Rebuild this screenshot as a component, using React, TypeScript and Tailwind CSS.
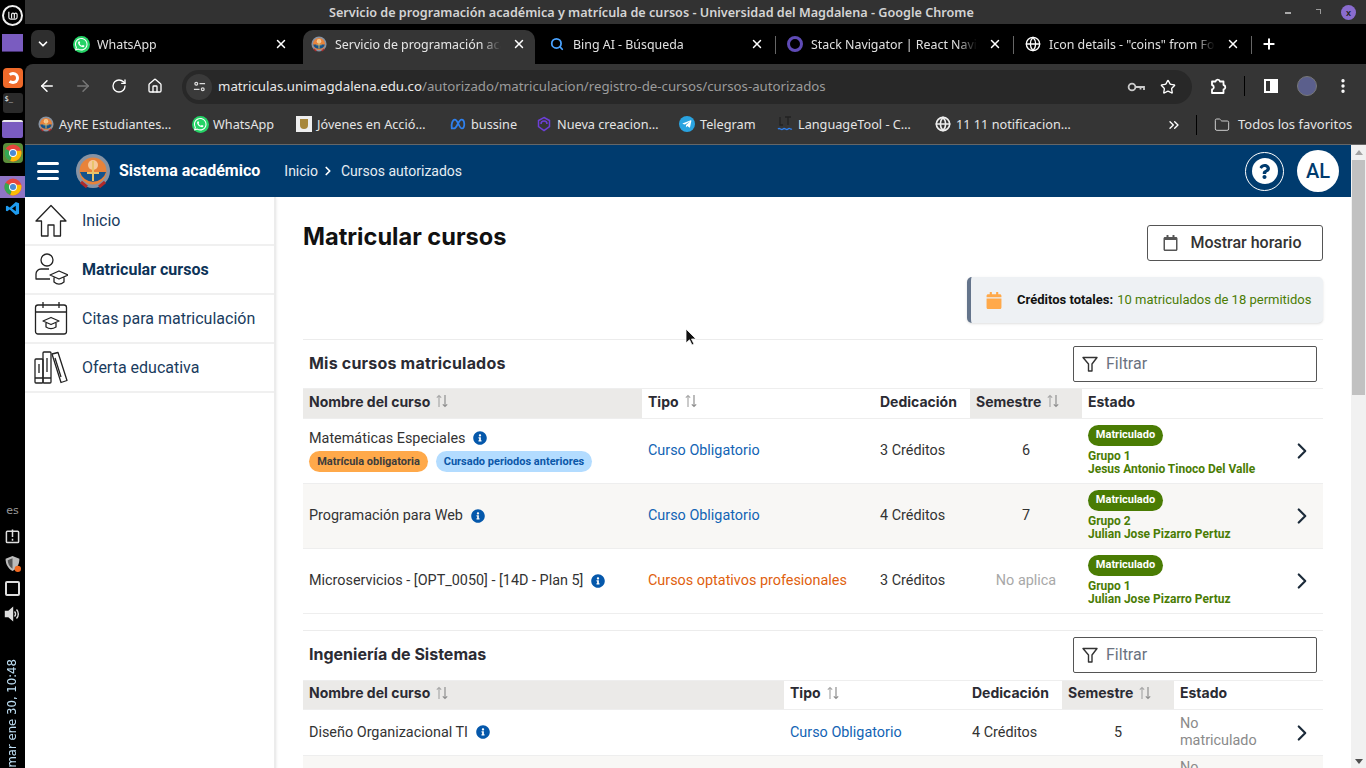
import React from 'react';
import { ArrowLeft, ArrowRight, RotateCw, Home, Star, MoreVertical, ChevronDown, X, Plus, ChevronsRight, Folder, ChevronRight, Search, Globe } from 'lucide-react';
import { FaWhatsapp, FaTelegramPlane, FaInfoCircle, FaQuestion, FaRegCalendar, FaCalendar } from 'react-icons/fa';

const chromeFont = "font-['Noto_Sans',sans-serif]";

const WhatsIcon = ({ s = 'w-[17px] h-[17px]' }: { s?: string }) => (
  <span className={`${s} rounded-full bg-[#25d366] flex items-center justify-center text-white shrink-0`}>
    <FaWhatsapp className="w-[85%] h-[85%]" />
  </span>
);

const UniLogo = ({ s = 'w-4 h-4' }: { s?: string }) => (
  <svg viewBox="0 0 36 36" className={`${s} shrink-0`}>
    <circle cx="18" cy="18" r="17" fill="#8793a3" />
    <circle cx="18" cy="18" r="13.5" fill="#e8833a" />
    <path d="M5 19h26a13.500 13.500 0 0 1-26 0z" fill="#14538c" />
    <circle cx="18" cy="12" r="5" fill="#f6c99a" />
    <path d="M17 8h2v20h-2zM12 19h12v2H12z" fill="#e9c46a" />
    <path d="M6 29l6 5M30 29l-6 5" stroke="#b02a2a" strokeWidth="3" />
  </svg>
);

const ChromeIcon = () => (
  <svg viewBox="0 0 20 20" className="w-[18px] h-[18px]">
    <circle cx="10" cy="10" r="9.500" fill="#e8453c" />
    <path d="M10 10L1.800 5.200A9.500 9.500 0 0 0 7 19z" fill="#34a853" />
    <path d="M10 10l-3 9A9.500 9.500 0 0 0 19 7.500H10z" fill="#fbbc05" />
    <circle cx="10" cy="10" r="4.400" fill="#fff" />
    <circle cx="10" cy="10" r="3.400" fill="#4a8ad4" />
  </svg>
);

const Tab = ({ icon, label, active, sep }: { icon: React.ReactNode; label: string; active?: boolean; sep?: boolean }) => (
  <div className={`relative w-[238px] h-10 flex items-center shrink-0 ${chromeFont} text-[12.400px]`}>
    {active && <div className="absolute left-[3px] right-[3px] top-[6px] bottom-0 bg-[#353535] rounded-t-[10px]" />}
    <div className="relative w-[35px] pl-[3px] flex justify-center shrink-0">{icon}</div>
    <span className={`relative w-[166px] pt-[3px] overflow-hidden whitespace-nowrap [mask-image:linear-gradient(to_right,black_88%,transparent)] ${active ? 'text-[#e6e6e6]' : 'text-[#e0e0e0]'}`}>{label}</span>
    <X className="relative w-3.5 h-3.5 text-white ml-[11px]" strokeWidth={2.5} />
    {sep && <div className="absolute right-0 top-[12px] h-[18px] w-px bg-[#666]" />}
  </div>
);

const Bookmark = ({ icon, label, w }: { icon: React.ReactNode; label: string; w: string }) => (
  <div className={`flex items-center gap-[5px] shrink-0 ${w}`}>
    <span className="w-4 flex justify-center shrink-0">{icon}</span>
    <span className="whitespace-nowrap text-[12.700px] text-[#e4e4e4]">{label}</span>
  </div>
);

const SortIcon = () => (
  <svg viewBox="0 0 14 14" className="w-[14px] h-[14px] ml-[5px] shrink-0" fill="none" stroke="#a9a9a9" strokeWidth="1.200">
    <path d="M4 13V1.500M1.800 3.700L4 1.500l2.200 2.200" />
    <path d="M10 1v11.500M7.800 10.300L10 12.500l2.200-2.200" stroke="#8f8f8f" />
  </svg>
);

const Info = ({ ml = 'ml-[8px]' }: { ml?: string }) => <FaInfoCircle className={`w-[14px] h-[14px] text-[#0558ab] inline-block shrink-0 ${ml}`} />;

const Filter = ({ cls = '' }: { cls?: string }) => (
  <div className={`w-[244px] h-[36px] border border-[#555] rounded-[2px] mr-[6px] flex items-center pl-[7px] gap-[7px] ${cls}`}>
    <svg viewBox="0 0 18 18" className="w-[18px] h-[18px]" fill="none" stroke="#333" strokeWidth="1.400">
      <path d="M2 2.500h14l-5 6.500v7H7.500V9z" strokeLinejoin="round" />
    </svg>
    <span className="text-[16px] text-[#6b7280]">Filtrar</span>
  </div>
);

const HeadCell = ({ label, sort, shaded }: { label: string; sort?: boolean; shaded?: boolean }) => (
  <div className={`h-full flex items-center pl-[6px] pb-[5px] font-['Inter',sans-serif] text-[14px] font-bold text-[#2b2b33] ${shaded ? 'bg-[#ebeae8]' : ''}`}>
    {label}
    {sort && <SortIcon />}
  </div>
);

const Matriculado = ({ grupo, docente }: { grupo: string; docente: string }) => (
  <div className="flex flex-col items-start pb-[1px]">
    <span className="w-[75px] h-[21px] rounded-full bg-[#4a7c04] text-white text-[11px] font-bold flex items-center justify-center">Matriculado</span>
    <span className="mt-[4px] text-[12px] leading-[13px] font-bold text-[#4a7c04]">{grupo}</span>
    <span className="text-[12px] leading-[13px] font-bold text-[#4a7c04]">{docente}</span>
  </div>
);

const Arrow = () => <ChevronRight className="w-[26px] h-[26px] text-[#1c2b3a] shrink-0" strokeWidth={2} />;

const BigHomeIcon = () => (
  <svg viewBox="0 0 34 34" className="w-[34px] h-[34px]" fill="none" stroke="#222" strokeWidth="1.300" strokeLinejoin="round">
    <path d="M17 1.500L2 17h5.500v15H14V21h6v11h6.500V17H32z" />
  </svg>
);
const StudentIcon = () => (
  <svg viewBox="0 0 34 34" className="w-[34px] h-[34px]" fill="none" stroke="#222" strokeWidth="1.300" strokeLinejoin="round">
    <circle cx="13" cy="7" r="6" />
    <path d="M15 16H7a5 5 0 0 0-5 5v5h14" />
    <path d="M16 22l9-4 9 4-9 4zM20 24.500V29c3 2.500 7 2.500 10 0v-4.500" />
  </svg>
);
const CalIcon = () => (
  <svg viewBox="0 0 34 34" className="w-[34px] h-[34px]" fill="none" stroke="#222" strokeWidth="1.300" strokeLinejoin="round">
    <rect x="1.500" y="3" width="31" height="29" rx="2.500" />
    <path d="M1.500 10h31M9 0v6M25 0v6" />
    <path d="M9 19l8-3.500 8 3.500-8 3.500zM12 21v4c3 2 7 2 10 0v-4" />
  </svg>
);
const BooksIcon = () => (
  <svg viewBox="0 0 34 34" className="w-[34px] h-[34px]" fill="none" stroke="#222" strokeWidth="1.300" strokeLinejoin="round">
    <rect x="1" y="8" width="8" height="24" rx="1" />
    <rect x="9" y="1" width="8" height="31" rx="1" />
    <path d="M18 3l6-1.500 9 28-6 2z" />
    <path d="M5 13v9M13 7v14M21 7l6 19M1 27h8M9 27h8" />
  </svg>
);

const SideItem = ({ icon, label, bold }: { icon: React.ReactNode; label: string; bold?: boolean }) => (
  <div className="h-[49px] border-b-2 border-[#f0f0f0] flex items-center pl-[9px] gap-[14px]">
    <span className="w-[34px] flex justify-center">{icon}</span>
    <span className={`text-[16px] ${bold ? 'font-bold text-[#0d3358]' : 'text-[#1a3c5e]'}`}>{label}</span>
  </div>
);

const App = () => {
  return (
    <div className="relative w-[1366px] h-[768px] overflow-hidden flex bg-black font-['Roboto',sans-serif]">
      {/* dock */}
      <div className="w-[25px] h-full shrink-0 bg-black flex flex-col items-center relative">
        <div className="mt-[5px] w-[21px] h-[21px] rounded-full border-2 border-[#eee] flex items-center justify-center text-[#eee]">
          <svg viewBox="0 0 12 12" className="w-[11px] h-[11px]" fill="none" stroke="currentColor" strokeWidth="1.300"><path d="M2 2v6a2 2 0 0 0 2 2h5a2 2 0 0 0 2-2V5a1.500 1.500 0 0 0-3 0v4M5 9V5a1.500 1.500 0 0 1 3 0" /></svg>
        </div>
        <div className="mt-[8px] w-[21px] h-[18px] bg-[#7a5cc0] border-b border-[#453070]" />
        <div className="mt-[16px] w-[20px] h-[20px] rounded-[4px] bg-[#ef6a2a] flex items-center justify-center">
          <div className="w-[12px] h-[12px] rounded-full border-[3px] border-white border-l-transparent" />
        </div>
        <div className="mt-[5px] w-[20px] h-[20px] rounded-[3px] bg-[#2a2a2a] text-white text-[7px] font-['DejaVu_Sans_Mono',monospace] leading-[12px] pl-[2px]">$_</div>
        <div className="mt-[7px] w-[21px] h-[18px] rounded-[2px] bg-[#7a5cc0] border-t-2 border-[#eee]" />
        <div className="mt-[5px] w-[20px] h-[20px] rounded-[4px] bg-[#5b8f3a] flex items-center justify-center"><ChromeIcon /></div>
        <div className="mt-[13px] w-[25px] h-[22px] bg-[#8f74c4] flex items-center justify-center"><ChromeIcon /></div>
        <div className="mt-[3px]">
          <svg viewBox="0 0 16 16" className="w-[15px] h-[15px]"><path d="M11.500 1L5 7 2.300 5 1 5.700v4.600L2.300 11 5 9l6.500 6L15 13.500v-11zM11.500 5v6L7.500 8z" fill="#1f9cf0" /></svg>
        </div>
        <div className="absolute top-[503px] left-0 w-full text-center text-[11px] text-[#9a9a9a] font-['DejaVu_Sans',sans-serif]">es</div>
        <svg viewBox="0 0 16 16" className="absolute top-[528px] left-[5px] w-[15px] h-[16px]" fill="none" stroke="#ddd" strokeWidth="1.600"><rect x="1.500" y="3" width="13" height="12" rx="1" /><path d="M8 1v8M8 11v2" /></svg>
        <svg viewBox="0 0 16 16" className="absolute top-[555px] left-[4px] w-[17px] h-[17px]"><path d="M8 1l6.500 2.500c0 5-2 9-6.500 11.500C3.500 12.500 1.500 8.500 1.500 3.500z" fill="#bbb" /><path d="M8 3v10c-3-2-4.500-5-4.500-8z" fill="#555" /><circle cx="13" cy="13" r="3" fill="#f26a21" /></svg>
        <div className="absolute top-[581px] left-[5px] w-[15px] h-[15px] rounded-[2px] border-2 border-[#ddd] bg-black" />
        <svg viewBox="0 0 16 16" className="absolute top-[606px] left-[4px] w-[17px] h-[16px]" fill="none" stroke="#ddd" strokeWidth="1.400"><path d="M1 5.500h3L8 2v12l-4-3.500H1z" fill="#ddd" /><path d="M10 5.500a3.500 3.500 0 0 1 0 5M12 3.500a6.500 6.500 0 0 1 0 9" /></svg>
        <div className="absolute bottom-0 left-[4px] [writing-mode:vertical-rl] rotate-180 text-[11.700px] leading-[17px] whitespace-nowrap font-['DejaVu_Sans',sans-serif] text-[#bfe0f5]">mar ene 30, 10:48</div>
      </div>

      {/* chrome window */}
      <div className="flex-1 min-w-0 flex flex-col">
        <div className={`h-6 bg-[#323232] flex items-center relative shrink-0 pl-[304px] ${chromeFont} text-[12.640px] font-semibold text-[#d4d4d4] whitespace-nowrap`}>
          Servicio de programación académica y matrícula de cursos - Universidad del Magdalena - Google Chrome
          <div className="absolute left-[1260px] top-[12px] w-[6px] h-[1.500px] bg-[#aaa]" />
          <div className="absolute left-[1291px] top-[9px] w-[5px] h-[5px] border-r border-t border-[#999]" />
          <div className="absolute left-[1316px] top-[5px] w-[15px] h-[15px] rounded-full bg-[#8a6ccf] text-[#222] text-[9px] flex items-center justify-center">x</div>
        </div>

        <div className="h-10 bg-black flex items-center shrink-0 relative">
          <div className="w-[24px] h-[28px] ml-[6px] mr-[7px] rounded-[7px] bg-[#2e2e2e] flex items-center justify-center shrink-0">
            <ChevronDown className="w-3.5 h-3.5 text-white" strokeWidth={3} />
          </div>
          <Tab icon={<WhatsIcon />} label="WhatsApp" />
          <Tab icon={<UniLogo />} label="Servicio de programación académica" active />
          <Tab icon={<Search className="w-3.5 h-3.5 text-[#4aa3ff]" strokeWidth={3} />} label="Bing AI - Búsqueda" sep />
          <Tab icon={<span className="w-4 h-4 rounded-full border-[3px] border-[#5f4bb6] block" />} label="Stack Navigator | React Navigation" sep />
          <Tab icon={<Globe className="w-4 h-4 text-white" />} label={'Icon details - "coins" from Font Awesome'} sep />
          <Plus className="w-4 h-4 text-white ml-[9px]" strokeWidth={3} />
        </div>

        <div className={`h-[44px] bg-[#353535] rounded-tl-[8px] flex items-center shrink-0 ${chromeFont}`}>
          <ArrowLeft className="w-[18px] h-[18px] text-white ml-[13px]" strokeWidth={2} />
          <ArrowRight className="w-[18px] h-[18px] text-[#777] ml-[18px]" strokeWidth={2} />
          <RotateCw className="w-[16px] h-[16px] text-white ml-[19px]" strokeWidth={2} />
          <Home className="w-[16px] h-[16px] text-white ml-[20px]" strokeWidth={2} />
          <div className="ml-[19px] w-[1010px] h-[34px] mt-[1px] rounded-full bg-[#282828] flex items-center pl-[4px] pr-[16px]">
            <div className="w-[26px] h-[26px] rounded-full bg-[#3a3a3a] flex items-center justify-center shrink-0">
              <svg viewBox="0 0 14 14" className="w-[13px] h-[13px]" fill="none" stroke="#ddd" strokeWidth="1.300"><circle cx="3.500" cy="4" r="1.500" /><path d="M7 4h6M1 10h6" /><circle cx="10.500" cy="10" r="1.500" /></svg>
            </div>
            <span className="ml-[6px] pt-[1px] text-[13.250px] text-[#e8e8e8] whitespace-nowrap">matriculas.unimagdalena.edu.co<span className="text-[#9c9c9c]">/autorizado/matriculacion/registro-de-cursos/cursos-autorizados</span></span>
            <svg viewBox="0 0 18 12" className="w-[18px] h-[12px] ml-auto" fill="none" stroke="#ccc" strokeWidth="1.800"><circle cx="5" cy="6" r="3.400" /><path d="M8.500 6H17v3M13.500 6v2.500" /></svg>
            <Star className="w-4 h-4 text-white ml-[15px]" strokeWidth={2} />
          </div>
          <svg viewBox="0 0 18 18" className="w-[18px] h-[18px] ml-[17px]" fill="none" stroke="#fff" strokeWidth="1.800" strokeLinejoin="round"><path d="M3 4.500h3.500a2.300 2.300 0 0 1 4.500 0H14.500V8a2.300 2.300 0 0 1 0 4.500V16H3v-3.500a2.300 2.300 0 0 0 0-4.500z" /></svg>
          <div className="w-px h-5 bg-black ml-[17px]" />
          <div className="w-[14px] h-[14px] border-2 border-white ml-[19px] flex justify-end"><div className="w-[6px] h-full bg-white" /></div>
          <div className="ml-[19px] w-5 h-5 rounded-full bg-[#5b5f8c] border border-[#777]" />
          <MoreVertical className="w-[18px] h-[18px] text-white ml-[17px]" strokeWidth={2.500} />
        </div>

        <div className={`h-[37px] pb-[3px] bg-[#353535] border-b border-[#666] flex items-center pl-[13px] shrink-0 ${chromeFont}`}>
          <Bookmark w="w-[154px]" icon={<UniLogo />} label="AyRE Estudiantes…" />
          <Bookmark w="w-[104px]" icon={<WhatsIcon />} label="WhatsApp" />
          <Bookmark w="w-[154px]" icon={<span className="w-4 h-4 bg-[#eee] flex items-center justify-center"><span className="w-2 h-2.5 bg-[#a8873a] rounded-b-full" /></span>} label="Jóvenes en Acció…" />
          <Bookmark w="w-[86px]" icon={<svg viewBox="0 0 18 12" className="w-4 h-3" fill="none" stroke="#2f80ed" strokeWidth="2"><path d="M2 11C1 6 3 1 5.500 1 9 1 10 11 13.500 11 17 11 17 1 13 1 9.500 1 8 11 4.500 11 3 11 2 11 2 11z" /></svg>} label="bussine" />
          <Bookmark w="w-[143px]" icon={<svg viewBox="0 0 16 16" className="w-4 h-4" fill="none" stroke="#6d3fd8" strokeWidth="1.500"><path d="M8 1.500l5.500 3v6L8 14.500 2.500 10.500v-6zM5 8a3 3 0 0 1 6 0" /></svg>} label="Nueva creacion…" />
          <Bookmark w="w-[98px]" icon={<span className="w-4 h-4 rounded-full bg-[#2aa3e0] flex items-center justify-center text-white"><FaTelegramPlane className="w-2.5 h-2.5" /></span>} label="Telegram" />
          <Bookmark w="w-[158px]" icon={<svg viewBox="0 0 16 16" className="w-4 h-4" fill="none" strokeWidth="1.300"><path d="M3 1v8h3M8 1h6M11 1v8" stroke="#222" /><path d="M1 13c2-2 3 2 5 0s3 2 5 0 2 1 4 0" stroke="#2f80ed" /></svg>} label="LanguageTool - C…" />
          <Bookmark w="w-[231px]" icon={<Globe className="w-4 h-4 text-[#eee]" strokeWidth={2.5} />} label="11 11 notificacion…" />
          <ChevronsRight className="w-4 h-4 text-white" strokeWidth={2} />
          <div className="w-px h-5 bg-black ml-[14px]" />
          <Folder className="w-4 h-4 text-[#ccc] ml-[17px]" strokeWidth={1.500} />
          <span className="ml-[8px] text-[13px] text-[#e4e4e4] whitespace-nowrap">Todos los favoritos</span>
        </div>

        <div className="flex-1 min-h-0 flex bg-white">
          <div className="flex-1 min-w-0 flex flex-col">
            <div className="h-[52px] bg-[#003b6e] flex items-center shrink-0 relative text-white">
              <div className="ml-[12px] w-[22px] flex flex-col gap-[4.500px]">
                <div className="h-[3px] bg-white rounded-sm" />
                <div className="h-[3px] bg-white rounded-sm" />
                <div className="h-[3px] bg-white rounded-sm" />
              </div>
              <div className="ml-[16px]"><UniLogo s="w-[36px] h-[36px]" /></div>
              <span className="ml-[8px] text-[16px] font-bold">Sistema académico</span>
              <span className="ml-[24px] text-[14px] text-[#e6edf3]">Inicio</span>
              <ChevronRight className="w-3.5 h-3.5 mx-[3px]" strokeWidth={3} />
              <span className="ml-[3px] text-[14px] text-[#e6edf3]">Cursos autorizados</span>
              <div className="ml-auto w-[39px] h-[39px] rounded-full border border-white flex items-center justify-center">
                <span className="w-[26px] h-[26px] rounded-full bg-white flex items-center justify-center text-[#003b6e]"><FaQuestion className="w-[13px] h-[15px]" /></span>
              </div>
              <div className="ml-[13px] mr-[12px] w-[42px] h-[42px] rounded-full bg-white text-[#003b6e] text-[20px] font-medium flex items-center justify-center">AL</div>
            </div>

            <div className="flex-1 min-h-0 flex">
              <div className="w-[251px] shrink-0 border-r-2 border-[#ececec] shadow-sm">
                <SideItem icon={<BigHomeIcon />} label="Inicio" />
                <SideItem icon={<StudentIcon />} label="Matricular cursos" bold />
                <SideItem icon={<CalIcon />} label="Citas para matriculación" />
                <SideItem icon={<BooksIcon />} label="Oferta educativa" />
              </div>

              <div className="flex-1 min-w-0 overflow-hidden pl-[27px] pr-[28px] pt-[28px]">
                <div className="flex items-start justify-between">
                  <h1 className="font-['Inter',sans-serif] text-[23.600px] leading-[24px] font-bold text-[#111]">Matricular cursos</h1>
                  <div className="w-[176px] h-[36px] border border-[#555] rounded-[3px] flex items-center justify-center gap-[12px] text-[#333] text-[16px] font-medium pr-[5px]">
                    <FaRegCalendar className="w-[15px] h-[16px] text-[#555]" />
                    Mostrar horario
                  </div>
                </div>

                <div className="mt-[16px] ml-auto w-[356px] h-[46px] bg-[#eef1f4] border-l-4 border-[#64748b] rounded-[5px] shadow-sm flex items-center pl-[15px] text-[13px]">
                  <FaCalendar className="w-[16px] h-[17px] text-[#ffa94a]" />
                  <span className="ml-[15px] font-bold text-[#111]">Créditos totales:</span>
                  <span className="ml-[4px] text-[#4a7c04]">10 matriculados de 18 permitidos</span>
                </div>

                {/* mis cursos */}
                <div className="mt-[16px] h-[49px] border-t border-[#ececec] flex items-center justify-between pl-[6px]">
                  <span className="font-['Inter',sans-serif] text-[16px] tracking-[0.2px] -mt-[2px] font-bold text-[#2b2b33]">Mis cursos matriculados</span>
                  <Filter />
                </div>
                <div className="h-[31px] border-y border-[#eeeeee] grid grid-cols-[339px_232px_96px_112px_241px] items-center">
                  <HeadCell label="Nombre del curso" sort shaded />
                  <HeadCell label="Tipo" sort />
                  <HeadCell label="Dedicación" />
                  <HeadCell label="Semestre" sort shaded />
                  <HeadCell label="Estado" />
                </div>
                <div className="h-[65px] border-b border-[#eeeeee] grid grid-cols-[339px_232px_96px_112px_241px] items-center text-[14.400px] text-[#333]">
                  <div className="pl-[6px] pb-[2px] flex flex-col items-start">
                    <div className="flex items-center">Matemáticas Especiales<Info /></div>
                    <div className="flex gap-[8px] mt-[2px]">
                      <span className="w-[119px] h-[21px] rounded-full bg-[#ffa94a] text-[#3c3c3c] text-[11px] font-bold flex items-center justify-center">Matrícula obligatoria</span>
                      <span className="w-[156px] h-[21px] rounded-full bg-[#b3dcff] text-[#0b57a8] text-[11px] font-bold flex items-center justify-center">Cursado periodos anteriores</span>
                    </div>
                  </div>
                  <div className="pl-[6px] text-[#1264b4]">Curso Obligatorio</div>
                  <div className="pl-[6px]">3 Créditos</div>
                  <div className="text-center">6</div>
                  <div className="pl-[6px] flex items-center justify-between pr-[8px]"><Matriculado grupo="Grupo 1" docente="Jesus Antonio Tinoco Del Valle" /><Arrow /></div>
                </div>
                <div className="h-[65px] bg-[#f8f7f5] border-b border-[#eeeeee] grid grid-cols-[339px_232px_96px_112px_241px] items-center text-[14.400px] text-[#333]">
                  <div className="pl-[6px] flex items-center">Programación para Web<Info /></div>
                  <div className="pl-[6px] text-[#1264b4]">Curso Obligatorio</div>
                  <div className="pl-[6px]">4 Créditos</div>
                  <div className="text-center">7</div>
                  <div className="pl-[6px] flex items-center justify-between pr-[8px]"><Matriculado grupo="Grupo 2" docente="Julian Jose Pizarro Pertuz" /><Arrow /></div>
                </div>
                <div className="h-[65px] border-b border-[#eeeeee] grid grid-cols-[339px_232px_96px_112px_241px] items-center text-[14.400px] text-[#333]">
                  <div className="pl-[6px] flex items-center">Microservicios - [OPT_0050] - [14D - Plan 5]<Info /></div>
                  <div className="pl-[6px] text-[#e0610e]">Cursos optativos profesionales</div>
                  <div className="pl-[6px]">3 Créditos</div>
                  <div className="text-center text-[#a8a8a8]">No aplica</div>
                  <div className="pl-[6px] flex items-center justify-between pr-[8px]"><Matriculado grupo="Grupo 1" docente="Julian Jose Pizarro Pertuz" /><Arrow /></div>
                </div>

                {/* ingenieria */}
                <div className="mt-[16px] h-[50px] border-t border-[#ececec] flex items-center justify-between pl-[6px]">
                  <span className="font-['Inter',sans-serif] text-[16px] -mt-[4px] font-bold text-[#2b2b33]">Ingeniería de Sistemas</span>
                  <Filter cls="-mt-[2px]" />
                </div>
                <div className="h-[30px] border-y border-[#eeeeee] grid grid-cols-[481px_182px_96px_112px_149px] items-center">
                  <HeadCell label="Nombre del curso" sort shaded />
                  <HeadCell label="Tipo" sort />
                  <HeadCell label="Dedicación" />
                  <HeadCell label="Semestre" sort shaded />
                  <HeadCell label="Estado" />
                </div>
                <div className="h-[46px] border-b border-[#eeeeee] grid grid-cols-[481px_182px_96px_112px_149px] items-center text-[14.400px] text-[#333]">
                  <div className="pl-[6px] flex items-center">Diseño Organizacional TI<Info /></div>
                  <div className="pl-[6px] text-[#1264b4]">Curso Obligatorio</div>
                  <div className="pl-[6px]">4 Créditos</div>
                  <div className="text-center">5</div>
                  <div className="pl-[6px] flex items-center justify-between pr-[8px]">
                    <span className="leading-[17px] pb-[2px] text-[#8a8a8a]">No<br />matriculado</span>
                    <Arrow />
                  </div>
                </div>
                <div className="h-[46px] bg-[#f8f7f5] pt-[3px] pl-[877px] text-[14.400px] leading-[17px] text-[#8a8a8a]">No</div>
              </div>
            </div>
          </div>

          {/* scrollbar */}
          <div className="w-[15px] shrink-0 bg-[#f1f1f1] flex flex-col items-center">
            <div className="mt-[5px] w-0 h-0 border-x-[4px] border-x-transparent border-b-[5px] border-b-[#a3a3a3]" />
            <div className="mt-[5px] w-[13px] h-[235px] bg-[#c1c1c1]" />
            <div className="mt-auto mb-[4px] w-0 h-0 border-x-[4px] border-x-transparent border-t-[5px] border-t-[#505050]" />
          </div>
        </div>
      </div>

      {/* cursor */}
      <svg viewBox="0 0 12 18" className="absolute left-[685px] top-[328px] w-[12px] h-[18px]"><path d="M1 1v14l3.500-3.200L7 17l2-1-2.500-5H11z" fill="#111" stroke="#fff" strokeWidth="0.800" /></svg>
    </div>
  );
};

export default App;
